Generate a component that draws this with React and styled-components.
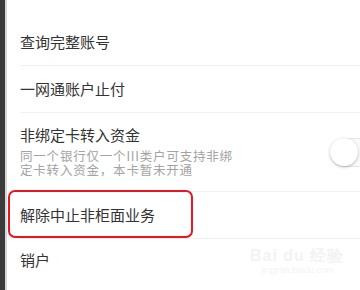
import React from 'react';
import styled, { createGlobalStyle } from 'styled-components';

const Global = createGlobalStyle`
  html, body {
    margin: 0;
    padding: 0;
    background: #fff;
  }
  body {
    font-family: "Noto Sans CJK SC", "Noto Sans", sans-serif;
  }
`;

const Screen = styled.div`
  position: relative;
  width: 360px;
  height: 290px;
  overflow: hidden;
  background: #fff;
  display: flex;
`;

const EdgeBar = styled.div`
  width: 5px;
  flex-shrink: 0;
  background: #3b3b3b;
  border-right: 2px solid #d6d6d6;
`;

const List = styled.div`
  flex: 1;
  padding-top: 19px;
  display: flex;
  flex-direction: column;
`;

const Row = styled.div`
  position: relative;
  padding-left: 13px;
`;

const RowInner = styled.div`
  display: flex;
  align-items: center;
  height: ${(p) => p.$h || 46}px;
  box-sizing: border-box;
  border-bottom: ${(p) => (p.$last ? 'none' : '1px solid #f0f0f0')};
`;

const TextCol = styled.div`
  flex: 1;
  align-self: stretch;
  padding-top: 12px;
  display: flex;
  flex-direction: column;
`;

const Title = styled.div`
  font-size: 15px;
  line-height: 20px;
  color: #333;
`;

const Sub = styled.div`
  margin-top: 4px;
  font-size: 12.5px;
  line-height: 14px;
  letter-spacing: 0.8px;
  color: #a3a3a3;
  span {
    display: block;
  }
`;

const Toggle = styled.div`
  flex-shrink: 0;
  width: 52px;
  height: 27px;
  margin-right: -24px;
  border-radius: 14px;
  border: 1px solid #e6e6e6;
  background: #fafafa;
  position: relative;
`;

const Knob = styled.div`
  position: absolute;
  left: -1px;
  top: -1px;
  width: 28px;
  height: 28px;
  border-radius: 50%;
  background: #fff;
  box-shadow: 0 1px 3px rgba(0, 0, 0, 0.28);
`;

const Highlight = styled.div`
  position: absolute;
  left: 1px;
  top: -2px;
  width: 181px;
  height: 44px;
  border: 2px solid #ea1520;
  border-radius: 7px;
  pointer-events: none;
`;

const Watermark = styled.div`
  position: absolute;
  left: 250px;
  top: 247px;
  display: flex;
  flex-direction: column;
  align-items: center;
  color: #f3f3f3;
  font-family: "Liberation Sans", Arial, sans-serif;
  pointer-events: none;
`;

const MarkTop = styled.div`
  font-size: 16px;
  font-weight: bold;
  letter-spacing: 1px;
  line-height: 18px;
`;

const MarkUrl = styled.div`
  font-size: 9px;
  line-height: 11px;
`;

export default function App() {
  return (
    <>
      <Global />
      <Screen>
        <EdgeBar />
        <List>
          <Row>
            <RowInner $h={47}>
              <Title>查询完整账号</Title>
            </RowInner>
          </Row>
          <Row>
            <RowInner $h={47}>
              <Title>一网通账户止付</Title>
            </RowInner>
          </Row>
          <Row>
            <RowInner $h={79}>
              <TextCol>
                <Title>非绑定卡转入资金</Title>
                <Sub>
                  <span>同一个银行仅一个III类户可支持非绑</span>
                  <span>定卡转入资金，本卡暂未开通</span>
                </Sub>
              </TextCol>
              <Toggle>
                <Knob />
              </Toggle>
            </RowInner>
          </Row>
          <Row>
            <RowInner $h={47}>
              <Title>解除中止非柜面业务</Title>
            </RowInner>
            <Highlight />
          </Row>
          <Row>
            <RowInner $h={42} $last>
              <Title>销户</Title>
            </RowInner>
          </Row>
        </List>
        <Watermark>
          <MarkTop>Bai du 经验</MarkTop>
          <MarkUrl>jingyan.baidu.com</MarkUrl>
        </Watermark>
      </Screen>
    </>
  );
}
